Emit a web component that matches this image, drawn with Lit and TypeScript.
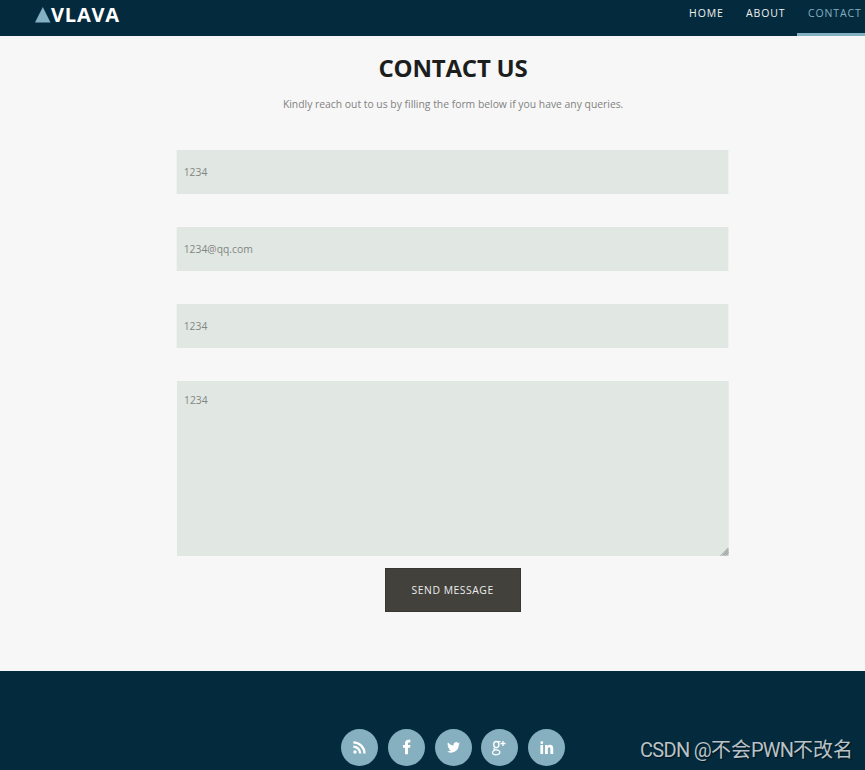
import { LitElement, html, css, svg } from "lit";
import { customElement } from "lit/decorators.js";

const socials = [
  { name: "RSS", art: svg`<circle cx="14" cy="23" r="1.7" fill="#fff"/><path d="M12.3 17.6a6.9 6.9 0 0 1 6.9 6.9M12.3 13.3a11.2 11.2 0 0 1 11.2 11.2" fill="none" stroke="#fff" stroke-width="2.3"/>` },
  { name: "Facebook", art: svg`<path d="M17 25.2v-6.5h-2v-2.8h2v-1.5c0-2.4 1.2-3.7 3.4-3.7h1.9v2.8H21c-.8 0-1 .4-1 1.1v1.3h2.4l-.3 2.8H20v6.5z" fill="#fff"/>` },
  { name: "Twitter", art: svg`<path transform="translate(12.1 11.9) scale(.54)" d="M24 4.6a10 10 0 0 1-2.8.8 4.9 4.9 0 0 0 2.2-2.7 10 10 0 0 1-3.1 1.2 4.9 4.9 0 0 0-8.4 4.5A14 14 0 0 1 1.7 3.1 4.9 4.9 0 0 0 3.2 9.7a5 5 0 0 1-2.2-.6A4.9 4.9 0 0 0 4.9 14a5 5 0 0 1-2.2.1 4.9 4.9 0 0 0 4.6 3.4A10 10 0 0 1 0 19.5a14 14 0 0 0 21.5-12.4A10 10 0 0 0 24 4.6z" fill="#fff"/>` },
  { name: "Google Plus", art: svg`<g fill="none" stroke="#fff"><ellipse cx="15.3" cy="15.6" rx="2.6" ry="3.1" stroke-width="1.4"/><path d="M16 12.6h3.6" stroke-width="1.1"/><path d="M14.2 18.5c-2.2 1.2-1.6 2.2.6 2.4 2.4.2 4.1.6 4.1 2.2 0 1.7-1.7 2.7-3.8 2.7-2.2 0-3.6-.8-3.6-2.2 0-1.3 1-2 2.6-2.7" stroke-width="1.2"/><path d="M22 12v5M19.5 14.5h5" stroke-width="1.3"/></g>` },
  { name: "LinkedIn", art: svg`<path d="M12.4 16h2.7v9h-2.7zM17 16h2.6v1.2c1.4-2.2 5.6-1.8 5.6 2.2V25h-2.8v-5c0-2.6-2.6-2.3-2.6 0v5H17z" fill="#fff"/><circle cx="13.8" cy="13.7" r="1.4" fill="#fff"/>` },
];

@customElement("app-root")
export class AppRoot extends LitElement {
  static styles = css`
    :host { display: block; position: relative; width: 100%; height: 770px; overflow: hidden; background: #f7f7f7; font-family: "Open Sans", sans-serif; }
    * { box-sizing: border-box; }
    .page { width: 906px; height: 770px; display: flex; flex-direction: column; }
    header { height: 36px; background: #042a3d; display: flex; justify-content: space-between; padding: 0 31px 0 35px; flex: none; }
    .logo { display: flex; align-items: flex-start; height: 30px; color: #fff; font-weight: 700; font-size: 20px; line-height: 30px; letter-spacing: .8px; }
    .logo svg { width: 16px; height: 16px; margin-top: 7px; flex: none; }
    nav { display: grid; grid-template-columns: 57px 62px 78px; }
    nav a { color: #f1f1f1; font-size: 11.5px; line-height: 25px; letter-spacing: 1px; padding-left: 11px; height: 36px; white-space: nowrap; }
    nav span { display: inline-block; transform: scaleX(.91); transform-origin: left; }
    nav a.active { color: #83b0c2; border-bottom: 3px solid #83b0c2; }
    main { height: 635px; flex: none; display: flex; flex-direction: column; align-items: center; padding-top: 13px; }
    h1 { margin: 0; font-size: 24px; line-height: 38px; font-weight: 700; letter-spacing: -.2px; color: #1c1e1d; white-space: nowrap; }
    p { margin: 8px 0 0; font-size: 11.5px; transform: scaleX(.9); line-height: 17px; color: #818181; white-space: nowrap; }
    form { width: 552px; margin-top: 37.5px; display: flex; flex-direction: column; align-items: center; }
    input, textarea { display: block; width: 613.3px; transform: scaleX(.9); border: 0; border-radius: 0; outline: 0; background: #e1e7e2; color: #818684; font: 11.5px/20px "Open Sans", sans-serif; padding: 0 7.8px; flex: none; }
    input { height: 44px; margin-bottom: 33.2px; padding-bottom: 1px; }
    .area { position: relative; width: 552px; height: 175px; }
    textarea { height: 175px; padding-top: 9px; resize: none; transform-origin: left; }
    .grip { position: absolute; right: 0; bottom: 0; width: 9px; height: 9px; }
    button { width: 136px; height: 44px; margin-top: 11.6px; padding: 0 0 1px; border: 1px solid #383733; background: #42413c; color: #ededed; font: 11.5px "Open Sans", sans-serif; letter-spacing: .6px; white-space: nowrap; }
    button span { display: inline-block; transform: scaleX(.9); }
    footer { flex: 1; background: #042a3d; display: flex; justify-content: center; gap: 9.7px; padding-top: 58px; }
    .social { width: 37px; height: 37px; border-radius: 50%; background: #86b0bf; }
    .social svg { display: block; width: 37px; height: 37px; }
    .mark { position: absolute; left: 640px; top: 735px; font: 20px/30px Roboto, "Noto Sans CJK SC", sans-serif; color: #b9c2c7; text-shadow: 1px 1px 1px #0008; white-space: nowrap; }
    .latin { letter-spacing: -.85px; }
    .latin.lead { letter-spacing: -.7px; }
  `;

  render() {
    return html`<div class="page">
      <header>
        <div class="logo"><svg viewBox="0 0 16 16"><path d="M7.8 0L15.5 15.5H0z" fill="#83b0c2"/></svg><span>VLAVA</span></div>
        <nav><a><span>HOME</span></a><a><span>ABOUT</span></a><a class="active"><span>CONTACT</span></a></nav>
      </header>
      <main>
        <h1>CONTACT US</h1>
        <p>Kindly reach out to us by filling the form below if you have any queries.</p>
        <form>
          <input .value=${"1234"}><input .value=${"1234@qq.com"}><input .value=${"1234"}>
          <div class="area"><textarea .value=${"1234"}></textarea>
            <svg class="grip" viewBox="0 0 9 9"><path d="M1 8.5L8.5 1V8.5z" fill="#b4bab6"/><path d="M0.5 8.5L8.5 .5M3 8.5L8.5 3M5.5 8.5l3-3" stroke="#8a908d" stroke-width=".8" stroke-dasharray="1 .6"/></svg>
          </div>
          <button type="button"><span>SEND MESSAGE</span></button>
        </form>
      </main>
      <footer>${socials.map(s => html`<a class="social" aria-label=${s.name}><svg viewBox="0 0 37 37">${s.art}</svg></a>`)}</footer>
    </div><div class="mark"><span class="latin lead">CSDN @</span>不会<span class="latin">PWN</span>不改名</div>`;
  }
}
